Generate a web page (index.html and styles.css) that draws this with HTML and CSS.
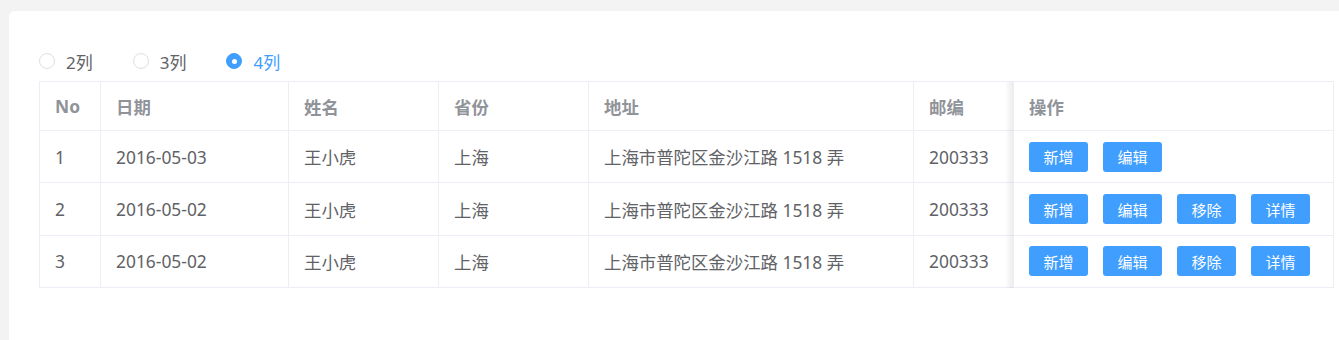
FILE: index.html
```html
<!DOCTYPE html>
<html lang="zh">
<head>
    <meta charset="UTF-8">
    <title>表格列</title>
    <link rel="stylesheet" href="styles.css">
</head>
<body>
    <div class="card">
        <!-- column switch -->
        <div class="radio-group">
            <label class="radio"><span class="radio-dot"></span><span class="radio-label">2列</span></label>
            <label class="radio"><span class="radio-dot"></span><span class="radio-label">3列</span></label>
            <label class="radio checked"><span class="radio-dot"></span><span class="radio-label">4列</span></label>
        </div>

        <table class="data-table">
            <colgroup>
                <col style="width:61px">
                <col style="width:188px">
                <col style="width:150px">
                <col style="width:150px">
                <col style="width:325px">
                <col style="width:100px">
                <col style="width:320px">
            </colgroup>
            <thead>
                <tr>
                    <th>No</th>
                    <th>日期</th>
                    <th>姓名</th>
                    <th>省份</th>
                    <th>地址</th>
                    <th>邮编</th>
                    <th class="fixed-col">操作</th>
                </tr>
            </thead>
            <tbody>
                <tr>
                    <td>1</td>
                    <td>2016-05-03</td>
                    <td>王小虎</td>
                    <td>上海</td>
                    <td>上海市普陀区金沙江路 1518 弄</td>
                    <td>200333</td>
                    <td class="fixed-col">
                        <div class="actions">
                            <button class="btn">新增</button>
                            <button class="btn">编辑</button>
                        </div>
                    </td>
                </tr>
                <tr>
                    <td>2</td>
                    <td>2016-05-02</td>
                    <td>王小虎</td>
                    <td>上海</td>
                    <td>上海市普陀区金沙江路 1518 弄</td>
                    <td>200333</td>
                    <td class="fixed-col">
                        <div class="actions">
                            <button class="btn">新增</button>
                            <button class="btn">编辑</button>
                            <button class="btn">移除</button>
                            <button class="btn">详情</button>
                        </div>
                    </td>
                </tr>
                <tr>
                    <td>3</td>
                    <td>2016-05-02</td>
                    <td>王小虎</td>
                    <td>上海</td>
                    <td>上海市普陀区金沙江路 1518 弄</td>
                    <td>200333</td>
                    <td class="fixed-col">
                        <div class="actions">
                            <button class="btn">新增</button>
                            <button class="btn">编辑</button>
                            <button class="btn">移除</button>
                            <button class="btn">详情</button>
                        </div>
                    </td>
                </tr>
            </tbody>
        </table>
    </div>
</body>
</html>
```

FILE: styles.css
```css
html, body {
    overflow: hidden;
}

body {
    margin: 0;
    padding: 11px 0 0 9px;
    background: #f3f3f3;
    font-family: "Noto Sans", "Noto Sans CJK SC", sans-serif;
    color: #606266;
}

.card {
    width: 1360px;
    min-height: 340px;
    background: #fff;
    border-radius: 6px;
    padding: 40px 0 0 30px;
    box-sizing: border-box;
}

.radio-group {
    display: flex;
    align-items: center;
    height: 20px;
    margin-bottom: 10px;
}

.radio {
    display: flex;
    align-items: center;
    cursor: pointer;
    font-size: 17px;
}

.radio + .radio {
    margin-left: 40px;
}

.radio-dot {
    width: 16px;
    height: 16px;
    border: 1px solid #dcdfe6;
    border-radius: 50%;
    box-sizing: border-box;
    background: #fff;
    margin-right: 11px;
    display: flex;
    align-items: center;
    justify-content: center;
}

.radio.checked .radio-dot {
    background: #409eff;
    border-color: #409eff;
}

.radio.checked .radio-dot::after {
    content: "";
    width: 5px;
    height: 5px;
    border-radius: 50%;
    background: #fff;
}

.radio.checked .radio-label {
    color: #409eff;
}

.data-table {
    border-collapse: collapse;
    table-layout: fixed;
    width: 1294px;
    font-size: 17.4px;
}

.data-table th,
.data-table td {
    border: 1px solid #ebeef5;
    padding: 0 15px;
    text-align: left;
    white-space: nowrap;
    overflow: hidden;
}

.data-table th {
    height: 48px;
    color: #909399;
    font-weight: bold;
}

.data-table td {
    height: 51.4px;
}

/* fixed right column with shadow on its left */
.data-table .fixed-col {
    position: relative;
    overflow: visible;
}

.data-table .fixed-col::before {
    content: "";
    position: absolute;
    top: 0;
    bottom: -1px;
    left: -9px;
    width: 8px;
    background: linear-gradient(to left, rgba(0, 0, 0, 0.07), rgba(0, 0, 0, 0.03) 60%, rgba(0, 0, 0, 0));
}

.actions {
    display: flex;
    gap: 15px;
}

.btn {
    width: 59px;
    height: 30px;
    padding: 0;
    border: none;
    border-radius: 3px;
    background: #409eff;
    color: #fff;
    font-family: inherit;
    font-size: 15px;
    cursor: pointer;
}
```
